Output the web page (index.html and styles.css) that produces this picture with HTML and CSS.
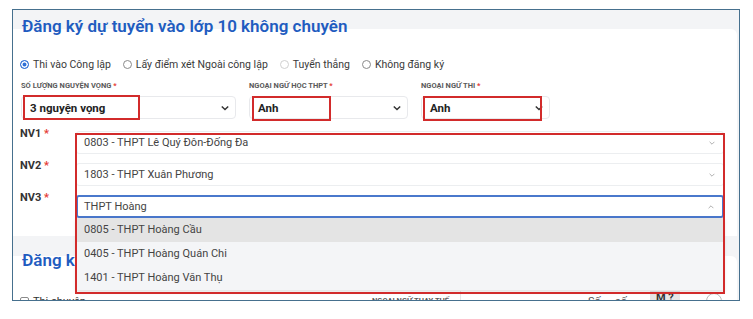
FILE: index.html
```html
<!DOCTYPE html>
<html lang="vi">
  <head>
    <meta charset="UTF-8" />
    <meta name="viewport" content="width=device-width, initial-scale=1.0" />
    <title>Đăng ký dự tuyển</title>
    <link rel="stylesheet" href="styles.css">
  </head>
  <body>
    <div class="frame">
      <section class="section">
        <header class="sec-head">
          <h2>Đăng ký dự tuyển vào lớp 10 không chuyên</h2>
        </header>
        <div class="card">
          <div class="radios">
            <label class="radio"><span class="dot checked"></span>Thi vào Công lập</label>
            <label class="radio"><span class="dot"></span>Lấy điểm xét Ngoài công lập</label>
            <label class="radio"><span class="dot disabled"></span>Tuyển thẳng</label>
            <label class="radio"><span class="dot"></span>Không đăng ký</label>
          </div>

          <div class="fields">
            <div class="field">
              <div class="label">Số lượng nguyện vọng <em>*</em></div>
              <div class="select">
                <span>3 nguyện vọng</span>
                <svg class="chev" viewBox="0 0 10 6"><path d="M1 1l4 4 4-4" /></svg>
                <i class="mark m1"></i>
              </div>
            </div>
            <div class="field">
              <div class="label">Ngoại ngữ học THPT <em>*</em></div>
              <div class="select">
                <span>Anh</span>
                <svg class="chev" viewBox="0 0 10 6"><path d="M1 1l4 4 4-4" /></svg>
                <i class="mark m2"></i>
              </div>
            </div>
            <div class="field">
              <div class="label">Ngoại ngữ thi <em>*</em></div>
              <div class="select">
                <span>Anh</span>
                <svg class="chev" viewBox="0 0 10 6"><path d="M1 1l4 4 4-4" /></svg>
                <i class="mark m3"></i>
              </div>
            </div>
          </div>

          <div class="wishes">
            <div class="wish-labels">
              <div class="nv">NV1 <em>*</em></div>
              <div class="nv">NV2 <em>*</em></div>
              <div class="nv">NV3 <em>*</em></div>
            </div>
            <div class="wish-inputs">
              <div class="combo">
                <span>0803 - THPT Lê Quý Đôn-Đống Đa</span>
                <svg class="chev small" viewBox="0 0 10 6"><path d="M1 1l4 4 4-4" /></svg>
              </div>
              <div class="combo">
                <span>1803 - THPT Xuân Phương</span>
                <svg class="chev small" viewBox="0 0 10 6"><path d="M1 1l4 4 4-4" /></svg>
              </div>
              <div class="combo focus">
                <span>THPT Hoàng</span>
                <svg class="chev small" viewBox="0 0 10 6"><path d="M1 5l4-4 4 4" /></svg>
              </div>
              <ul class="options">
                <li class="active">0805 - THPT Hoàng Cầu</li>
                <li>0405 - THPT Hoàng Quán Chi</li>
                <li>1401 - THPT Hoàng Văn Thụ</li>
              </ul>
              <i class="mark big"></i>
            </div>
          </div>
        </div>
      </section>

      <section class="section second">
        <header class="sec-head">
          <h2>Đăng ký dự tuyển vào lớp 10 chuyên</h2>
        </header>
        <div class="card">
          <div class="row-bottom">
            <label class="check"><span class="box"></span>Thi chuyên</label>
            <div class="label alt">Ngoại ngữ thay thế</div>
            <div class="alt-input"></div>
            <div class="alt-text">Số ... số</div>
            <div class="alt-btn">M ?</div>
            <div class="alt-circle"></div>
          </div>
        </div>
      </section>
    </div>
  </body>
</html>
```

FILE: styles.css
```css
html {
  box-sizing: border-box;
  font-family: Roboto, "Noto Sans", sans-serif;
  font-size: 11px;
}

*,
*:before,
*:after {
  box-sizing: inherit;
}

body {
  margin: 0;
  background: #fff;
  color: #333;
}

em {
  font-style: normal;
  color: #e53935;
}

.frame {
  margin: 9px 0 0 12px;
  width: 728px;
  height: 292px;
  border: 1px solid #46708e;
  background: #f3f4f6;
  overflow: hidden;
}

.sec-head {
  height: 19px;
  padding: 6px 0 0 9px;
}

.sec-head h2 {
  margin: 0;
  font-size: 17px;
  line-height: 20px;
  font-weight: 600;
  color: #1f5cc0;
  white-space: nowrap;
}

.card {
  margin-right: 2px;
  background: #fff;
  border-radius: 0 6px 0 0;
  padding: 28px 0 18px 7px;
}

/* radios */
.radios {
  display: flex;
  align-items: center;
  height: 14px;
  font-size: 10.5px;
}

.radio {
  display: flex;
  align-items: center;
  gap: 4px;
  margin-right: 12px;
  color: #3a3a3a;
}

.dot {
  width: 9px;
  height: 9px;
  border: 1px solid #8a8a8a;
  border-radius: 50%;
}

.dot.checked {
  border-color: #2f6fd6;
  background: #2f6fd6;
  box-shadow: inset 0 0 0 1.5px #fff;
}

.dot.disabled {
  border-color: #d0d0d0;
}

/* top fields */
.fields {
  display: grid;
  grid-template-columns: 215px 159px 129px;
  column-gap: 13px;
  margin-top: 10px;
  padding-left: 1px;
}

.label {
  font-size: 7.5px;
  line-height: 10px;
  font-weight: 700;
  text-transform: uppercase;
  color: #5a5a5a;
  white-space: nowrap;
}

.select {
  position: relative;
  display: flex;
  align-items: center;
  justify-content: space-between;
  height: 23px;
  margin-top: 5px;
  padding: 0 6px 0 8px;
  border: 1px solid #e8e9ec;
  border-radius: 4px;
  font-size: 11.5px;
  font-weight: 700;
  color: #222;
}

.chev {
  width: 8px;
  height: 6px;
  fill: none;
  stroke: #333;
  stroke-width: 1.8;
}

.chev.small {
  width: 6px;
  height: 4px;
  stroke: #9a9a9a;
  stroke-width: 1.3;
}

.mark {
  position: absolute;
  border: 2px solid #d22b2b;
  pointer-events: none;
}

.m1 { left: 1px; top: -2px; width: 117px; height: 25px; }
.m2 { left: 2px; top: -1px; width: 79px; height: 25px; }
.m3 { left: 1px; top: -1px; width: 119px; height: 25px; }

/* wishes */
.wishes {
  display: flex;
  margin-top: 12px;
}

.wish-labels {
  width: 56px;
  display: flex;
  flex-direction: column;
  gap: 19px;
  margin-top: -4px;
}

.nv {
  font-weight: 700;
  line-height: 13px;
  color: #333;
}

.wish-inputs {
  position: relative;
  width: 648px;
  display: flex;
  flex-direction: column;
  gap: 9px;
}

.combo {
  display: flex;
  align-items: center;
  justify-content: space-between;
  height: 23px;
  padding: 0 8px 0 7px;
  border: 1px solid #eceef0;
  border-radius: 3px;
  color: #444;
}

.combo.focus {
  border: 2px solid #4a78cc;
  padding-left: 6px;
}

.options {
  position: absolute;
  top: 87px;
  left: 0;
  right: 0;
  margin: 0;
  padding: 0;
  list-style: none;
  background: #f4f5f7;
  box-shadow: 0 2px 4px rgba(0, 0, 0, 0.12);
  color: #444;
}

.options li {
  height: 24px;
  line-height: 24px;
  padding-left: 8px;
}

.options li.active {
  background: #e4e4e4;
}

.mark.big {
  left: -1px;
  right: -1px;
  top: 2px;
  height: 161px;
}

/* second section */
.second {
  margin-top: 1px;
}

.second .sec-head {
  padding-top: 13px;
}

.second .card {
  padding-top: 38px;
}

.row-bottom {
  display: flex;
  align-items: center;
  height: 14px;
}

.check {
  display: flex;
  align-items: center;
  gap: 4px;
  width: 352px;
}

.box {
  width: 9px;
  height: 9px;
  border: 1px solid #8a8a8a;
  border-radius: 2px;
}

.label.alt {
  width: 88px;
}

.alt-input {
  width: 128px;
  height: 20px;
  border-left: 1px solid #e6e6e6;
}

.alt-text {
  width: 62px;
  color: #555;
}

.alt-btn {
  width: 30px;
  height: 20px;
  background: #e6e6e6;
  font-weight: 700;
  padding-left: 6px;
}

.alt-circle {
  margin-left: 26px;
  width: 16px;
  height: 16px;
  border: 1px solid #bbb;
  border-radius: 50%;
}
```
